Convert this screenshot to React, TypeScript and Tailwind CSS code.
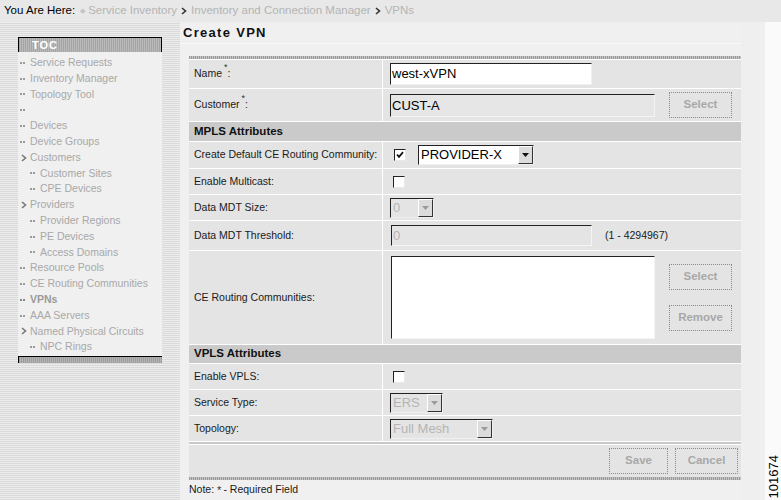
import React from "react";

const FONT = "font-['Liberation_Sans',Arial,Helvetica,sans-serif]";

function Dots({ color = "bg-[#9a9a9a]" }: { color?: string }) {
  return (
    <span className="inline-flex items-center gap-[1px] w-[8px] shrink-0">
      <span className={`w-[2px] h-[2px] ${color}`} />
      <span className={`w-[2px] h-[2px] ${color}`} />
    </span>
  );
}

function Chevron({ color = "#555" }: { color?: string }) {
  return (
    <svg width="8" height="8" viewBox="0 0 8 8" className="shrink-0">
      <path d="M2 1 L5.5 4 L2 7" fill="none" stroke={color} strokeWidth="1.6" />
    </svg>
  );
}

type TocItem = { label: string; indent?: boolean; kind?: "dots" | "chev" | "bold" };

const tocItems: TocItem[] = [
  { label: "Service Requests" },
  { label: "Inventory Manager" },
  { label: "Topology Tool" },
  { label: "" },
  { label: "Devices" },
  { label: "Device Groups" },
  { label: "Customers", kind: "chev" },
  { label: "Customer Sites", indent: true },
  { label: "CPE Devices", indent: true },
  { label: "Providers", kind: "chev" },
  { label: "Provider Regions", indent: true },
  { label: "PE Devices", indent: true },
  { label: "Access Domains", indent: true },
  { label: "Resource Pools" },
  { label: "CE Routing Communities" },
  { label: "VPNs", kind: "bold" },
  { label: "AAA Servers" },
  { label: "Named Physical Circuits", kind: "chev" },
  { label: "NPC Rings", indent: true },
];

function Checkbox({ checked }: { checked?: boolean }) {
  return (
    <span className="w-[12px] h-[12px] bg-white border border-t-[#222] border-l-[#222] border-r-[#e8e8e8] border-b-[#e8e8e8] flex items-center justify-center shrink-0">
      {checked && (
        <svg width="8" height="8" viewBox="0 0 8 8">
          <path d="M1 3.5 L3 5.8 L7 1.2" fill="none" stroke="#111" strokeWidth="1.8" />
        </svg>
      )}
    </span>
  );
}

function ArrowBtn({ disabled }: { disabled?: boolean }) {
  return (
    <span className="w-[15px] h-full bg-[#dcdcdc] border border-t-white border-l-white border-r-[#333] border-b-[#333] flex items-center justify-center shrink-0">
      <svg width="7" height="4" viewBox="0 0 7 4">
        <path d="M0 0 L7 0 L3.5 4 Z" fill={disabled ? "#9a9a9a" : "#111"} />
      </svg>
    </span>
  );
}

function Select({ value, w, disabled }: { value: string; w: string; disabled?: boolean }) {
  return (
    <span
      className={`${w} h-[20px] flex items-stretch border border-t-[#222] border-l-[#222] border-r-[#f0f0f0] border-b-[#f0f0f0] ${
        disabled ? "bg-[#e4e4e4] text-[#b4b4b4]" : "bg-white text-black"
      }`}
    >
      <span className="flex-1 pl-[2px] text-[13px] leading-[18px] overflow-hidden whitespace-nowrap">{value}</span>
      <ArrowBtn disabled={disabled} />
    </span>
  );
}

function DotBtn({ label, w }: { label: string; w: string }) {
  return (
    <span
      className={`${w} h-[26px] border border-dotted border-[#8a8a8a] bg-[#e4e4e4] text-[#a8a8a8] font-bold text-[11.5px] flex items-center justify-center`}
    >
      {label}
    </span>
  );
}

function Row({
  h,
  label,
  children,
  valueClass = "items-center",
}: {
  h: string;
  label: React.ReactNode;
  children?: React.ReactNode;
  valueClass?: string;
}) {
  return (
    <div className={`flex ${h} border-b border-white bg-[#e4e4e4]`}>
      <div className="w-[194px] border-r border-white flex items-center pl-[5px] text-[10.5px] text-[#1a1a1a] shrink-0">
        {label}
      </div>
      <div className={`flex-1 flex pl-[7px] ${valueClass}`}>{children}</div>
    </div>
  );
}

function Header({ h, label }: { h: string; label: string }) {
  return (
    <div className={`${h} border-b border-white bg-[#cacaca] flex items-center pl-[5px] text-[11.5px] font-bold text-[#111]`}>
      {label}
    </div>
  );
}

function Req({ label }: { label: string }) {
  return (
    <span className="flex items-start">
      <span>{label}</span>
      <span className="text-[9px] leading-[8px] ml-[2px] -mt-[3px] text-[#333]">*</span>
      <span>:</span>
    </span>
  );
}

export default function App() {
  return (
    <div className={`w-[781px] h-[500px] overflow-hidden bg-[#f0f0f0] ${FONT}`}>
      {/* breadcrumb */}
      <div className="h-[22px] bg-[#e8e8e8] flex items-center pl-[4px] text-[11.5px] gap-[3px] whitespace-nowrap">
        <span className="text-black">You Are Here:</span>
        <span className="text-[#c4c4c4] text-[7px] ml-[2px]">◆</span>
        <span className="text-[#b4b4b4]">Service Inventory</span>
        <Chevron color="#333" />
        <span className="text-[#b4b4b4]">Inventory and Connection Manager</span>
        <Chevron color="#333" />
        <span className="text-[#b4b4b4]">VPNs</span>
      </div>

      <div className="flex h-[478px]">
        {/* sidebar */}
        <aside className="w-[180px] shrink-0 bg-[repeating-linear-gradient(to_bottom,#ececec_0px,#ececec_1px,#dadada_1px,#dadada_2px)] pl-[18px] pt-[15px]">
          <div className="w-[144px]">
            <div className="h-[15px] border-t border-l border-r border-black bg-[repeating-linear-gradient(to_right,#a4a4a4_0px,#a4a4a4_1px,#bababa_1px,#bababa_2px)] flex items-center pl-[13px] text-[11px] font-bold text-white tracking-[1px]">
              TOC
            </div>
            <div className="bg-[#f0f0f0] pt-[3px] pb-[1px] text-[10.5px]">
              {tocItems.map((it, i) => (
                <div
                  key={i}
                  className={`h-[15.8px] flex items-center gap-[2px] ${it.indent ? "pl-[12px]" : "pl-[2px]"} ${
                    it.kind === "bold" ? "text-[#9a9a9a] font-bold" : "text-[#a8a8a8]"
                  } whitespace-nowrap`}
                >
                  {it.kind === "chev" ? <Chevron color="#777" /> : <Dots color={it.kind === "bold" ? "bg-[#888]" : "bg-[#9a9a9a]"} />}
                  <span>{it.label}</span>
                </div>
              ))}
            </div>
            <div className="h-[7px] border-t border-l border-black bg-[repeating-linear-gradient(to_right,#9c9c9c_0px,#9c9c9c_1px,#b4b4b4_1px,#b4b4b4_2px)]" />
          </div>
        </aside>

        {/* main */}
        <main className="flex-1 flex">
          <div className="w-[561px] shrink-0 flex flex-col">
            <div className="h-[21px] flex items-center pl-[3px] text-[13px] font-bold tracking-[1.3px] text-[#111]">
              Create VPN
            </div>
            <div className="h-px bg-[#fafafa]" />
            <div className="h-[12px]" />

            <div className="ml-[9px] w-[552px]">
              <div className="h-[3px] bg-[repeating-linear-gradient(to_right,#9a9a9a_0px,#9a9a9a_1px,#c4c4c4_1px,#c4c4c4_2px)]" />
              <div className="h-px bg-white" />

              <Row h="h-[29px]" label={<Req label="Name" />}>
                <span className="w-[202px] h-[22px] bg-white border border-t-[#222] border-l-[#222] border-r-[#f0f0f0] border-b-[#f0f0f0] pl-[1px] text-[13px] leading-[20px] text-black">
                  west-xVPN
                </span>
              </Row>

              <Row h="h-[33px]" label={<Req label="Customer" />}>
                <span className="w-[265px] h-[23px] bg-[#e6e6e6] border border-t-[#222] border-l-[#222] border-r-[#f4f4f4] border-b-[#f4f4f4] pl-[1px] text-[13px] leading-[21px] text-black">
                  CUST-A
                </span>
                <span className="ml-[14px]">
                  <DotBtn label="Select" w="w-[63px]" />
                </span>
              </Row>

              <Header h="h-[20px]" label="MPLS Attributes" />

              <Row h="h-[27px]" label="Create Default CE Routing Community:">
                <span className="ml-[4px]">
                  <Checkbox checked />
                </span>
                <span className="ml-[12px]">
                  <Select value="PROVIDER-X" w="w-[116px]" />
                </span>
              </Row>

              <Row h="h-[26px]" label="Enable Multicast:">
                <span className="ml-[3px]">
                  <Checkbox />
                </span>
              </Row>

              <Row h="h-[26px]" label="Data MDT Size:">
                <Select value="0" w="w-[44px]" disabled />
              </Row>

              <Row h="h-[30px]" label="Data MDT Threshold:">
                <span className="ml-[1px] w-[201px] h-[21px] bg-[#e4e4e4] border border-t-[#222] border-l-[#222] border-r-[#f4f4f4] border-b-[#f4f4f4] pl-[1px] text-[13px] leading-[19px] text-[#b4b4b4]">
                  0
                </span>
                <span className="ml-[13px] text-[10.5px] text-[#1a1a1a]">(1 - 4294967)</span>
              </Row>

              <Row h="h-[94px]" label="CE Routing Communities:" valueClass="items-start pt-[5px]">
                <span className="ml-[1px] w-[264px] h-[83px] bg-white border border-t-[#222] border-l-[#222] border-r-[#f4f4f4] border-b-[#f4f4f4]" />
                <span className="ml-[14px] mt-[8px] flex flex-col gap-[15px]">
                  <DotBtn label="Select" w="w-[63px]" />
                  <DotBtn label="Remove" w="w-[63px]" />
                </span>
              </Row>

              <Header h="h-[19px]" label="VPLS Attributes" />

              <Row h="h-[26px]" label="Enable VPLS:">
                <span className="ml-[3px]">
                  <Checkbox />
                </span>
              </Row>

              <Row h="h-[26px]" label="Service Type:">
                <Select value="ERS" w="w-[53px]" disabled />
              </Row>

              <Row h="h-[26px]" label="Topology:">
                <Select value="Full Mesh" w="w-[103px]" disabled />
              </Row>

              <div className="h-[2px] bg-[#c8c8c8]" />
              <div className="h-px bg-white" />
              <div className="h-[32px] bg-[#e4e4e4] flex items-center justify-end pr-[3px] gap-[7px]">
                <DotBtn label="Save" w="w-[59px]" />
                <DotBtn label="Cancel" w="w-[63px]" />
              </div>
              <div className="h-[3px] bg-[repeating-linear-gradient(to_right,#9a9a9a_0px,#9a9a9a_1px,#c4c4c4_1px,#c4c4c4_2px)]" />
            </div>

            <div className="h-[20px] ml-[9px] flex items-center text-[10.5px] text-[#1a1a1a]">
              Note: <span className="text-[#333] ml-[3px] mr-[2px] text-[11px]">*</span> - Required Field
            </div>
          </div>

          <div className="flex-1 flex">
            <div className="w-[24px] bg-[#efefef]" />
            <div className="flex-1 bg-[#fafafa] flex items-end justify-end pb-[2px]">
              <span className="[writing-mode:vertical-rl] rotate-180 text-[13px] text-black leading-[14px] font-['Liberation_Sans',Arial,sans-serif]">
                101674
              </span>
            </div>
          </div>
        </main>
      </div>
    </div>
  );
}
